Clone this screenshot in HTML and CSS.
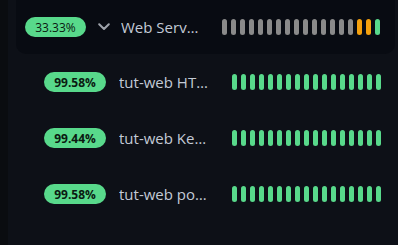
FILE: index.html
```html
<!DOCTYPE html>
<html>
<head>
<meta charset="utf-8">
<link rel="stylesheet" href="styles.css">
</head>
<body>
<div class="page">
  <div class="strip"></div>
  <div class="content">
    <div class="card row group">
      <span class="badge light">33.33%</span>
      <svg class="chev" width="12" height="8" viewBox="0 0 12 8"><path d="M1.2 1.2 L6 6 L10.8 1.2" fill="none" stroke="#9ea3ab" stroke-width="2" stroke-linecap="round" stroke-linejoin="round"/></svg>
      <span class="name name-group">Web Services</span>
      <div class="bars">
        <i class="bar gray"></i><i class="bar gray"></i><i class="bar gray"></i><i class="bar gray"></i><i class="bar gray"></i><i class="bar gray"></i><i class="bar gray"></i><i class="bar gray"></i><i class="bar gray"></i><i class="bar gray"></i><i class="bar gray"></i><i class="bar gray"></i><i class="bar gray"></i><i class="bar gray"></i><i class="bar gray"></i><i class="bar orange"></i><i class="bar orange"></i><i class="bar green"></i>
      </div>
    </div>
    <div class="row child">
      <span class="badge">99.58%</span>
      <span class="name name-child">tut-web HTTP Monitor</span>
      <div class="bars">
        <i class="bar green"></i><i class="bar green"></i><i class="bar green"></i><i class="bar green"></i><i class="bar green"></i><i class="bar green"></i><i class="bar green"></i><i class="bar green"></i><i class="bar green"></i><i class="bar green"></i><i class="bar green"></i><i class="bar green"></i><i class="bar green"></i><i class="bar green"></i><i class="bar green"></i><i class="bar green"></i><i class="bar green"></i>
      </div>
    </div>
    <div class="row child">
      <span class="badge">99.44%</span>
      <span class="name name-child">tut-web Keyword Monitor</span>
      <div class="bars">
        <i class="bar green"></i><i class="bar green"></i><i class="bar green"></i><i class="bar green"></i><i class="bar green"></i><i class="bar green"></i><i class="bar green"></i><i class="bar green"></i><i class="bar green"></i><i class="bar green"></i><i class="bar green"></i><i class="bar green"></i><i class="bar green"></i><i class="bar green"></i><i class="bar green"></i><i class="bar green"></i><i class="bar green"></i>
      </div>
    </div>
    <div class="row child">
      <span class="badge">99.58%</span>
      <span class="name name-child">tut-web port Monitor</span>
      <div class="bars">
        <i class="bar green"></i><i class="bar green"></i><i class="bar green"></i><i class="bar green"></i><i class="bar green"></i><i class="bar green"></i><i class="bar green"></i><i class="bar green"></i><i class="bar green"></i><i class="bar green"></i><i class="bar green"></i><i class="bar green"></i><i class="bar green"></i><i class="bar green"></i><i class="bar green"></i><i class="bar green"></i><i class="bar green"></i>
      </div>
    </div>
  </div>
</div>
</body>
</html>
```
FILE: styles.css
```css
html, body {
  margin: 0;
  padding: 0;
  background: #0d1017;
  font-family: "Open Sans", "Noto Sans", sans-serif;
}
.page {
  display: flex;
  width: 398px;
  height: 245px;
  overflow: hidden;
}
.strip {
  width: 8px;
  flex: none;
  background: #0a0c10;
}
.content {
  flex: 1;
  padding-left: 8px;
  padding-right: 3px;
  display: flex;
  flex-direction: column;
}
.row {
  display: flex;
  align-items: center;
  flex: none;
}
.card {
  height: 54px;
  background: #080b12;
  border-radius: 0 0 10px 10px;
  padding-left: 9px;
}
.child {
  height: 56px;
  padding-left: 28px;
}
.badge {
  display: inline-flex;
  align-items: center;
  justify-content: center;
  width: 61px;
  height: 20px;
  border-radius: 10px;
  background: #58d98b;
  color: #0b1a11;
  font-size: 12px;
  font-weight: 700;
  flex: none;
}
.badge.light {
  font-weight: 400;
}
.child .badge {
  width: 62px;
}
.chev {
  margin-left: 12px;
  flex: none;
}
.name {
  color: #c3cad6;
  font-size: 15px;
  white-space: nowrap;
  overflow: hidden;
  text-overflow: ellipsis;
  flex: none;
}
.name-group {
  margin-left: 11px;
  width: 80px;
  margin-right: 21px;
}
.name-child {
  margin-left: 13px;
  width: 92px;
  margin-right: 21px;
}
.bars {
  display: flex;
  gap: 4px;
}
.bar {
  display: block;
  width: 5px;
  height: 16px;
  border-radius: 3px;
}
.gray { background: #8a8a8a; }
.orange { background: #f5a10e; }
.green { background: #58d98b; }
```
